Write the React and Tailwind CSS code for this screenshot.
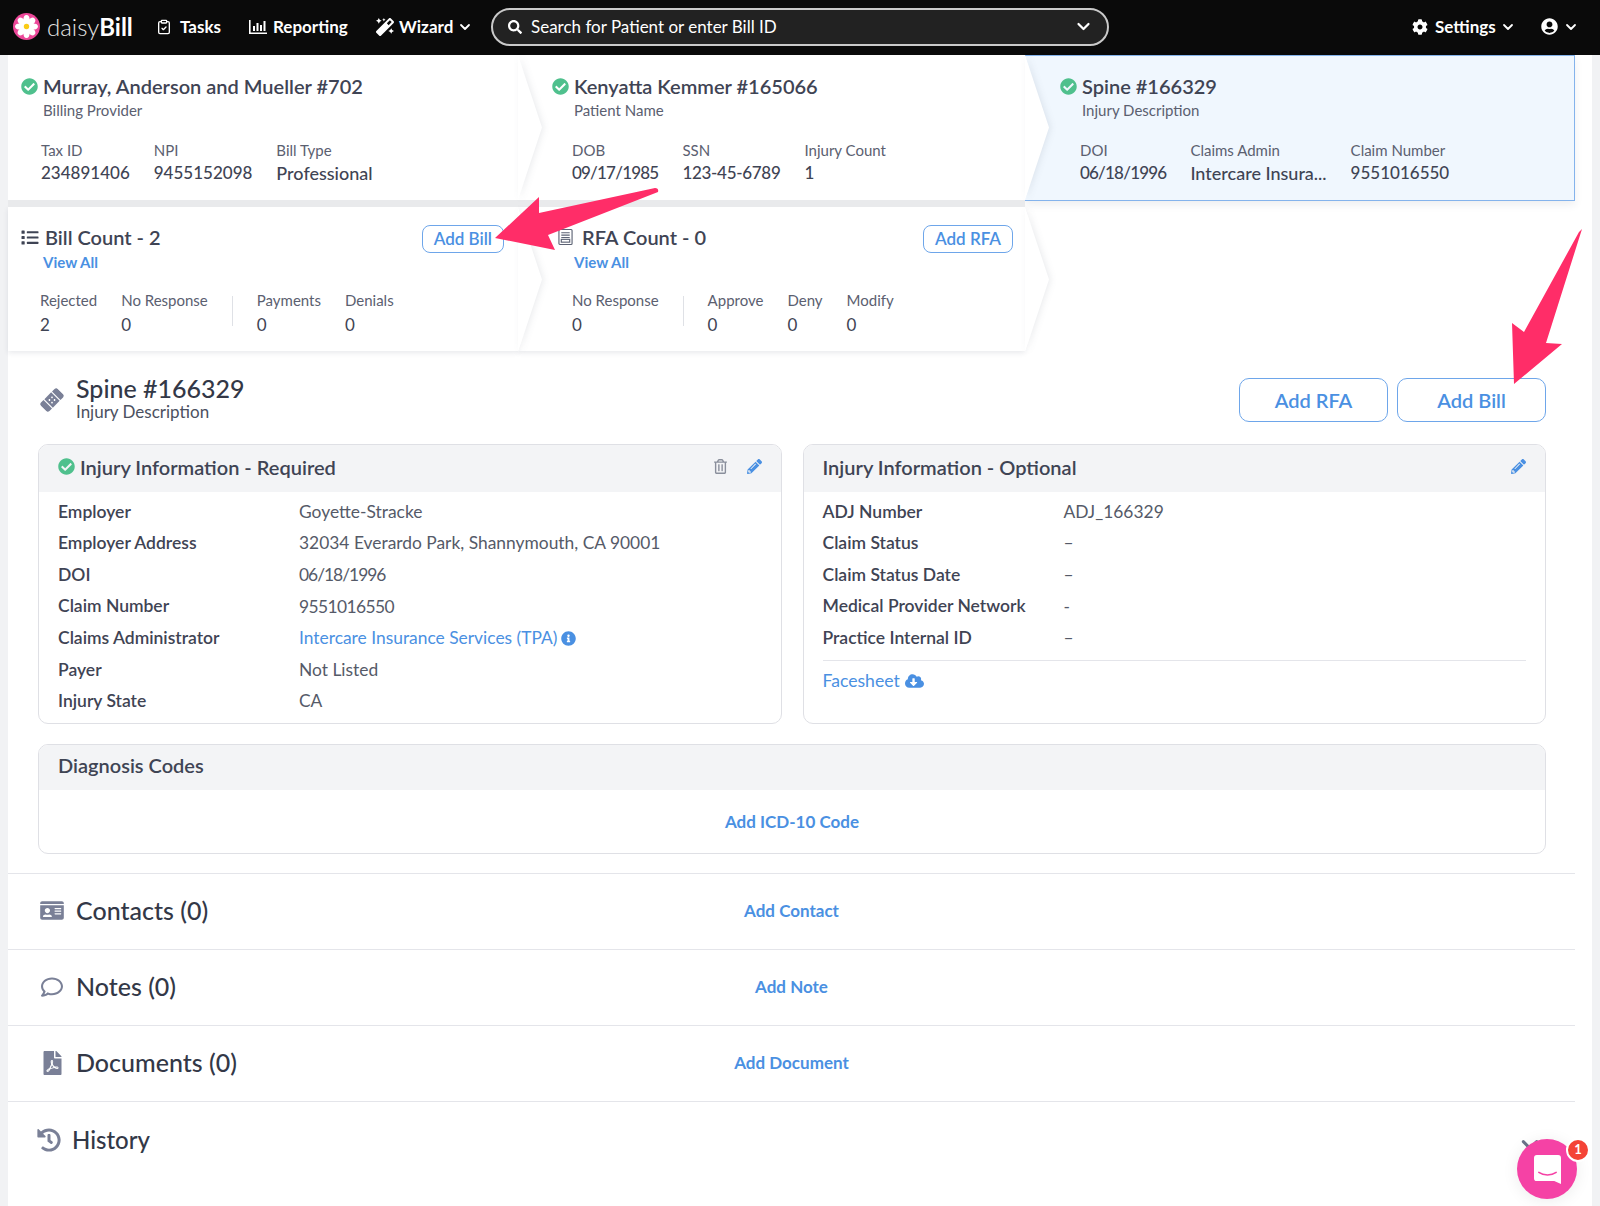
import React from 'react';
import { ClipboardCheck } from 'lucide-react';
import {
  FaCheckCircle, FaList, FaCog, FaUserCircle, FaPencilAlt, FaInfoCircle, FaCloudDownloadAlt,
  FaRegTrashAlt, FaIdCard, FaRegComment, FaFilePdf, FaHistory, FaBandAid, FaMagic, FaSearch,
} from 'react-icons/fa';

const Chevron = ({ className = 'w-3 h-3' }) => (
  <svg viewBox="0 0 12 12" className={className} fill="none" stroke="currentColor" strokeWidth="1.8" strokeLinecap="round" strokeLinejoin="round">
    <path d="M2 4l4 4 4-4" />
  </svg>
);

const Daisy = () => (
  <svg viewBox="0 0 26 26" className="w-[27px] h-[27px]">
    <circle cx="13" cy="13" r="13" fill="#ec4899" />
    {[0, 45, 90, 135, 180, 225, 270, 315].map((a) => (
      <ellipse key={a} cx="13" cy="6.6" rx="3" ry="4.6" fill="#fff" transform={`rotate(${a} 13 13)`} />
    ))}
    <circle cx="13" cy="13" r="2.6" fill="#facc15" />
  </svg>
);

const ChartIcon = () => (
  <svg viewBox="0 0 18 16" className="w-[18px] h-4" fill="#fff">
    <path d="M0 1h1.6v12.4H18V15H0z" />
    <rect x="4" y="7" width="2" height="5" />
    <rect x="7.5" y="4" width="2" height="8" />
    <rect x="11" y="6" width="2" height="6" />
    <rect x="14.5" y="2" width="2" height="10" />
  </svg>
);

const RfaIcon = () => (
  <svg viewBox="0 0 16 18" className="w-[15px] h-[18px] ml-[6px]" fill="none" stroke="#5c6274" strokeWidth="1.2">
    <rect x="1" y="1" width="14" height="16" rx="1" />
    <path d="M3.500 4.500h9M3.500 7h9M3.500 9.500h9" />
    <rect x="3.500" y="11.500" width="9" height="3" />
  </svg>
);

// valueClass narrows the digits, the installed font's figures run wider than the picture's
const Stat = ({ label, value, big, gap = 'mt-[2px]', valueClass = 'text-[17px]' }) => (
  <div>
    <div className="text-[15px] leading-[18px] text-[#5b6070]">{label}</div>
    <div className={`${gap} leading-[24px] text-[#3f4454] ${valueClass} ${big ? 'font-medium' : ''}`}>{value}</div>
  </div>
);

// arrow shaped right edge of a breadcrumb card
const CardPoint = () => (
  <svg viewBox="0 0 25 145" preserveAspectRatio="none" className="absolute top-0 right-[-25px] w-[25px] h-[145px] drop-shadow-[2px_0_3px_rgba(40,50,80,0.09)]">
    <path d="M0 0L24 72.5L0 145z" fill="#fff" />
  </svg>
);

const DATE = 'text-[17px] tracking-[-0.8px]';
const SSN = 'text-[17px] tracking-[-0.3px]';
const WORDS = 'text-[18px]';

const Crumb = ({ title, sub, stats, className, pad }) => (
  <div className={`relative h-[152px] border-b-[7px] border-[#e9eaec] ${className}`}>
    <div className={`${pad} pt-[19px]`}>
      <div className="flex items-center gap-[5px] h-[24px]">
        <FaCheckCircle className="text-[#4fc08d] w-[17px] h-[17px] shrink-0" />
        <span className="text-[20px] font-semibold text-[#3f4454] leading-[24px]">{title}</span>
      </div>
      <div className="ml-[22px] text-[15px] leading-[18px] mt-[3px] text-[#5b6070]">{sub}</div>
    </div>
    <div className={`${pad} flex gap-6 pt-[22px] ml-[20px]`}>
      {stats.map((s) => <Stat key={s[0]} label={s[0]} value={s[1]} valueClass={s[2]} big />)}
    </div>
    <CardPoint />
  </div>
);

const CountCard = ({ icon, title, pad, btn, groups, className, titleGap, linkGap }) => (
  <div className={`relative h-[144px] shadow-[0_2px_5px_rgba(40,50,80,0.1)] ${className}`}>
    <div className={`${pad} pt-[17px] flex items-start justify-between`}>
      <div>
        <div className={`flex items-center ${titleGap} h-[26px]`}>
          {icon}
          <span className="text-[20px] font-semibold text-[#3f4454] leading-[24px]">{title}</span>
        </div>
        <div className={`${linkGap} text-[15px] font-bold text-[#4a90e2] leading-[18px] mt-[3px]`}>View All</div>
      </div>
      <div className="border border-[#6ea6ea] rounded-lg h-[28px] mt-[1px] px-[11px] flex items-center text-[#4a90e2] text-[17px] font-semibold">{btn}</div>
    </div>
    <div className={`${pad} ml-[20px] flex pt-[20px]`}>
      {groups.map((g, i) => (
        <div key={i} className={`flex gap-6 ${i === 0 ? 'border-r border-[#dfe1e6] pr-6 mr-6 h-[30px] mt-[5px]' : 'mt-[0px]'}`}>
          {g.map((s) => <div key={s[0]} className={i === 0 ? '-mt-[5px]' : ''}><Stat label={s[0]} value={s[1]} gap="mt-[4px]" /></div>)}
        </div>
      ))}
    </div>
    <CardPoint />
  </div>
);

const InfoRow = ({ label, children }) => (
  <div className="flex items-center h-[31.6px]">
    <div className="w-[241px] text-[17.5px] font-semibold text-[#3f4454]">{label}</div>
    <div className="text-[17.4px] text-[#555a68]">{children}</div>
  </div>
);

const Section = ({ icon, title, add }) => (
  <div className="h-[76px] pb-[2px] border-t border-[#e4e5ea] grid grid-cols-[1fr_auto_1fr] items-center px-[32px]">
    <div className="flex items-center gap-[12px]">
      <span className="w-[24px] flex justify-center text-[#7a8097]">{icon}</span>
      <span className="text-[25px] font-medium text-[#333847]">{title}</span>
    </div>
    <div className="text-[17px] font-bold text-[#4a90e2]">{add}</div>
    <div />
  </div>
);

export default function App() {
  return (
    <div className="relative h-[1206px] w-[1600px] overflow-hidden bg-[#f1f2f4] font-['Lato',sans-serif]">
      <header className="h-[55px] pb-[2px] bg-[#0a0a0a] flex items-center text-white text-[17px] font-bold">
        <div className="ml-[13px] flex items-center w-[143px]">
          <Daisy />
          <span className="ml-[7px] text-[24px] font-light text-[#e5e5e5]">daisy<span className="font-bold text-white">Bill</span></span>
        </div>
        <div className="flex items-center gap-[8px] w-[93px]"><ClipboardCheck size={16} />Tasks</div>
        <div className="flex items-center gap-[6px] w-[127px]"><ChartIcon />Reporting</div>
        <div className="flex items-center gap-[5px] w-[115px]"><FaMagic className="w-[18px] h-[18px]" />Wizard<Chevron className="w-3 h-3 ml-[1px]" /></div>
        <div className="w-[618px] h-[38px] rounded-full border-2 border-[#c9c9c9] bg-[#222] flex items-center pl-[15px] pr-[16px] font-normal text-[17px]">
          <FaSearch className="w-[14px] h-[14px] mr-[9px]" />
          <span className="flex-1">Search for Patient or enter Bill ID</span>
          <Chevron className="w-[15px] h-[15px]" />
        </div>
        <div className="ml-[303px] flex items-center gap-[7px] w-[129px]"><FaCog className="w-4 h-4" />Settings<Chevron className="w-3 h-3 -ml-[1px]" /></div>
        <div className="flex items-center gap-[7px]"><FaUserCircle className="w-[17px] h-[17px]" /><Chevron className="w-3 h-3" /></div>
      </header>

      <main className="mx-[8px] h-[1151px] bg-white">
        <div className="flex items-start">
          <Crumb
            className="w-[510px] z-30 bg-white"
            pad="pl-[13px]"
            title="Murray, Anderson and Mueller #702"
            sub="Billing Provider"
            stats={[['Tax ID', '234891406'], ['NPI', '9455152098', 'text-[17px]'], ['Bill Type', 'Professional', WORDS]]}
          />
          <Crumb
            className="w-[507px] z-20 bg-white"
            pad="pl-[34px]"
            title="Kenyatta Kemmer #165066"
            sub="Patient Name"
            stats={[['DOB', '09/17/1985', DATE], ['SSN', '123-45-6789', SSN], ['Injury Count', '1']]}
          />
          <div className="w-[550px] h-[146px] bg-[#f0f7fe] border border-l-0 border-[#84b3ec] shadow-[0_4px_8px_rgba(40,50,80,0.08)] pl-[35px] pt-[18px] z-10">
            <div className="flex items-center gap-[5px] h-[24px]">
              <FaCheckCircle className="text-[#4fc08d] w-[17px] h-[17px]" />
              <span className="text-[20px] font-semibold text-[#3f4454] leading-[24px]">Spine #166329</span>
            </div>
            <div className="ml-[22px] text-[15px] leading-[18px] mt-[3px] text-[#5b6070]">Injury Description</div>
            <div className="flex gap-6 pt-[22px] ml-[20px]">
              <Stat label="DOI" value="06/18/1996" valueClass={DATE} big />
              <Stat label="Claims Admin" value="Intercare Insura..." valueClass={WORDS} big />
              <Stat label="Claim Number" value="9551016550" big />
            </div>
          </div>
        </div>

        <div className="flex">
          <CountCard
            className="w-[510px] z-20 bg-white"
            pad="pl-[12px] pr-[14px]"
            titleGap="gap-[5px]"
            linkGap="ml-[23px]"
            icon={<FaList className="w-[20px] h-[17px] text-[#3f4454]" />}
            title="Bill Count - 2"
            btn="Add Bill"
            groups={[[['Rejected', '2'], ['No Response', '0']], [['Payments', '0'], ['Denials', '0']]]}
          />
          <CountCard
            className="w-[507px] z-10 bg-white"
            pad="pl-[34px] pr-[12px]"
            titleGap="gap-[9px]"
            linkGap="ml-[22px]"
            icon={<RfaIcon />}
            title="RFA Count - 0"
            btn="Add RFA"
            groups={[[['No Response', '0']], [['Approve', '0'], ['Deny', '0'], ['Modify', '0']]]}
          />
        </div>

        <div className="pl-[30px] pr-[46px]">
          <div className="flex justify-between items-start pt-[27px]">
            <div className="flex items-center -mt-[5px]">
              <FaBandAid className="w-[24px] h-[24px] -rotate-45 text-[#7a8097] mr-[12px] ml-[2px] mt-[6px]" />
              <div>
                <div className="text-[25px] font-medium leading-[30px] text-[#333847]">Spine #166329</div>
                <div className="text-[17px] leading-[18px] text-[#4b5060]">Injury Description</div>
              </div>
            </div>
            <div className="flex gap-[9px]">
              <div className="w-[149px] h-[44px] border border-[#6ea6ea] rounded-[10px] flex items-center justify-center text-[#4a90e2] text-[20px] font-semibold">Add RFA</div>
              <div className="w-[149px] h-[44px] border border-[#6ea6ea] rounded-[10px] flex items-center justify-center text-[#4a90e2] text-[20px] font-semibold">Add Bill</div>
            </div>
          </div>

          <div className="grid grid-cols-2 gap-[21px] mt-[22px]">
            <section className="h-[280px] border border-[#dfe0e5] rounded-[10px] overflow-hidden">
              <div className="h-[47px] pb-[4px] bg-[#f3f4f6] flex items-center px-[19px]">
                <FaCheckCircle className="text-[#4fc08d] w-[17px] h-[17px] mr-[5px]" />
                <span className="flex-1 text-[20px] font-semibold text-[#3f4454]">Injury Information - Required</span>
                <FaRegTrashAlt className="w-[13px] h-[15px] text-[#8a8f9c] mr-[20px]" />
                <FaPencilAlt className="w-[15px] h-[15px] text-[#4a90e2]" />
              </div>
              <div className="px-[19px] pt-[4px]">
                <InfoRow label="Employer">Goyette-Stracke</InfoRow>
                <InfoRow label="Employer Address">32034 Everardo Park, Shannymouth, CA 90001</InfoRow>
                <InfoRow label="DOI"><span className="tracking-[-1px]">06/18/1996</span></InfoRow>
                <InfoRow label="Claim Number"><span className="tracking-[-0.6px]">9551016550</span></InfoRow>
                <InfoRow label="Claims Administrator">
                  <span className="flex items-center gap-[4px] text-[#4a90e2]">Intercare Insurance Services (TPA)<FaInfoCircle className="w-[15px] h-[15px]" /></span>
                </InfoRow>
                <InfoRow label="Payer">Not Listed</InfoRow>
                <InfoRow label="Injury State">CA</InfoRow>
              </div>
            </section>
            <section className="h-[280px] border border-[#dfe0e5] rounded-[10px] overflow-hidden">
              <div className="h-[47px] pb-[4px] bg-[#f3f4f6] flex items-center px-[19px]">
                <span className="flex-1 text-[20px] font-semibold text-[#3f4454]">Injury Information - Optional</span>
                <FaPencilAlt className="w-[15px] h-[15px] text-[#4a90e2]" />
              </div>
              <div className="px-[19px] pt-[4px]">
                <InfoRow label="ADJ Number">ADJ_166329</InfoRow>
                <InfoRow label="Claim Status">–</InfoRow>
                <InfoRow label="Claim Status Date">–</InfoRow>
                <InfoRow label="Medical Provider Network">-</InfoRow>
                <InfoRow label="Practice Internal ID">–</InfoRow>
                <div className="border-t border-[#e4e5ea] mt-[6px] pt-[7px] flex items-center gap-[5px] text-[17.6px] text-[#4a90e2]">
                  Facesheet<FaCloudDownloadAlt className="w-[19px] h-[16px]" />
                </div>
              </div>
            </section>
          </div>

          <section className="mt-[20px] h-[110px] border border-[#dfe0e5] rounded-[10px] overflow-hidden">
            <div className="h-[45px] pb-[5px] bg-[#f3f4f6] flex items-center px-[19px] text-[20px] font-semibold text-[#3f4454]">Diagnosis Codes</div>
            <div className="h-[63px] flex items-center justify-center text-[17px] font-bold text-[#4a90e2]">Add ICD-10 Code</div>
          </section>
        </div>

        <div className="mt-[19px] mr-[17px]">
          <Section icon={<FaIdCard className="w-[24px] h-[21px]" />} title="Contacts (0)" add="Add Contact" />
          <Section icon={<FaRegComment className="w-[24px] h-[22px]" />} title="Notes (0)" add="Add Note" />
          <Section icon={<FaFilePdf className="w-[19px] h-[24px]" />} title="Documents (0)" add="Add Document" />
          <div className="border-t border-[#e4e5ea] pl-[29px] pt-[24px] flex items-center gap-[11px]">
            <FaHistory className="w-[24px] h-[24px] text-[#7a8097]" />
            <span className="text-[24px] font-medium text-[#333847] leading-[28px]">History</span>
          </div>
        </div>
      </main>

      {/* chat launcher */}
      <Chevron className="absolute z-40 left-[1520px] top-[1135px] w-5 h-5 text-[#6b7289]" />
      <div className="absolute z-40 left-[1517px] top-[1139px] w-[60px] h-[60px] rounded-full bg-[#f542a5] flex items-center justify-center shadow-[0_2px_16px_rgba(0,0,0,0.08)]">
        <svg viewBox="0 0 28 30" className="w-[27px] h-[29px]">
          <path d="M3 0h22a3 3 0 013 3v27l-7-3H3a3 3 0 01-3-3V3a3 3 0 013-3z" fill="#fff" />
          <path d="M5 18c5 3.500 13 3.500 18 0" fill="none" stroke="#f542a5" strokeWidth="1.6" strokeLinecap="round" />
        </svg>
      </div>
      <div className="absolute z-40 left-[1566px] top-[1138px] w-[24px] h-[24px] rounded-full bg-[#f44336] border-2 border-white text-white text-[13px] font-bold flex items-center justify-center">1</div>

      {/* annotation arrows */}
      <svg className="absolute inset-0 z-50 pointer-events-none" width="1600" height="1206" viewBox="0 0 1600 1206">
        <path d="M495 238L539 197L539 213L655 188Q659 188 658 192L548 235L555 250z" fill="#ff2d68" />
        <path d="M1582 229L1546 343L1562 344L1514 384L1512 323L1524 332L1579 232z" fill="#ff2d68" />
      </svg>
    </div>
  );
}
